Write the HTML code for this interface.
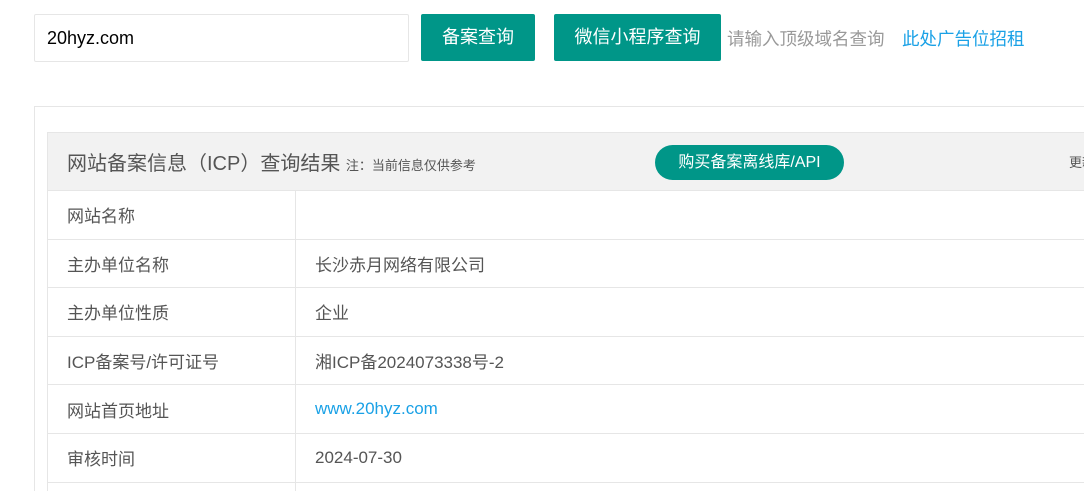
<!DOCTYPE html>
<html><head><meta charset="utf-8"><style>
html,body{margin:0;width:1084px;height:491px;overflow:hidden}
body{background:#fff;font-family:"Liberation Sans","Noto Sans CJK SC",sans-serif}
.wrap{position:relative;width:1084px;height:491px;overflow:hidden}
.abs{position:absolute}
.inp{left:34px;top:14px;font-size:18px;color:#000;line-height:46px;padding-left:12px;box-sizing:border-box;width:375px;height:48px;border:1px solid #e6e6e6;border-radius:2px}
.btn{background:#009688;color:#fff;font-size:18px;text-align:center;line-height:47px;height:47px;top:14px;border-radius:2px}
.box{left:34px;top:106px;width:1100px;height:400px;border:1px solid #e6e6e6}
table{position:absolute;left:47px;top:132px;border-collapse:collapse;width:1100px}
td{border:1px solid #e6e6e6;height:48.6px;padding:0 0 0 19px;font-size:17px;color:#555;box-sizing:border-box}
.hd td{background:#f2f2f2;height:58px;font-size:20px}
</style></head><body><div class="wrap">
<div class="abs inp">20hyz.com</div>
<div class="abs btn" style="left:421px;width:114px">备案查询</div>
<div class="abs btn" style="left:554px;width:167px">微信小程序查询</div>
<div class="abs" style="left:727px;top:26px;font-size:17.5px;color:#999">请输入顶级域名查询</div>
<div class="abs" style="left:902px;top:26px;font-size:17.5px;color:#1aa1e6">此处广告位招租</div>
<div class="abs box"></div>
<table>
<tr class="hd"><td colspan="2" style="position:relative">网站备案信息（ICP）查询结果 <span style="font-size:13px">注：当前信息仅供参考</span>
<div class="abs" style="left:607px;top:12px;width:189px;height:35px;border-radius:18px;background:#009688;color:#fff;font-size:16px;line-height:35px;text-align:center">购买备案离线库/API</div>
<div class="abs" style="left:1021px;top:19px;font-size:13px">更新</div></td></tr>
<tr><td style="width:248px">网站名称</td><td></td></tr>
<tr><td>主办单位名称</td><td>长沙赤月网络有限公司</td></tr>
<tr><td>主办单位性质</td><td>企业</td></tr>
<tr><td>ICP备案号/许可证号</td><td>湘ICP备2024073338号-2</td></tr>
<tr><td>网站首页地址</td><td style="color:#1aa1e6">www.20hyz.com</td></tr>
<tr><td>审核时间</td><td>2024-07-30</td></tr>
<tr><td></td><td></td></tr>
</table>
</div></body></html>
